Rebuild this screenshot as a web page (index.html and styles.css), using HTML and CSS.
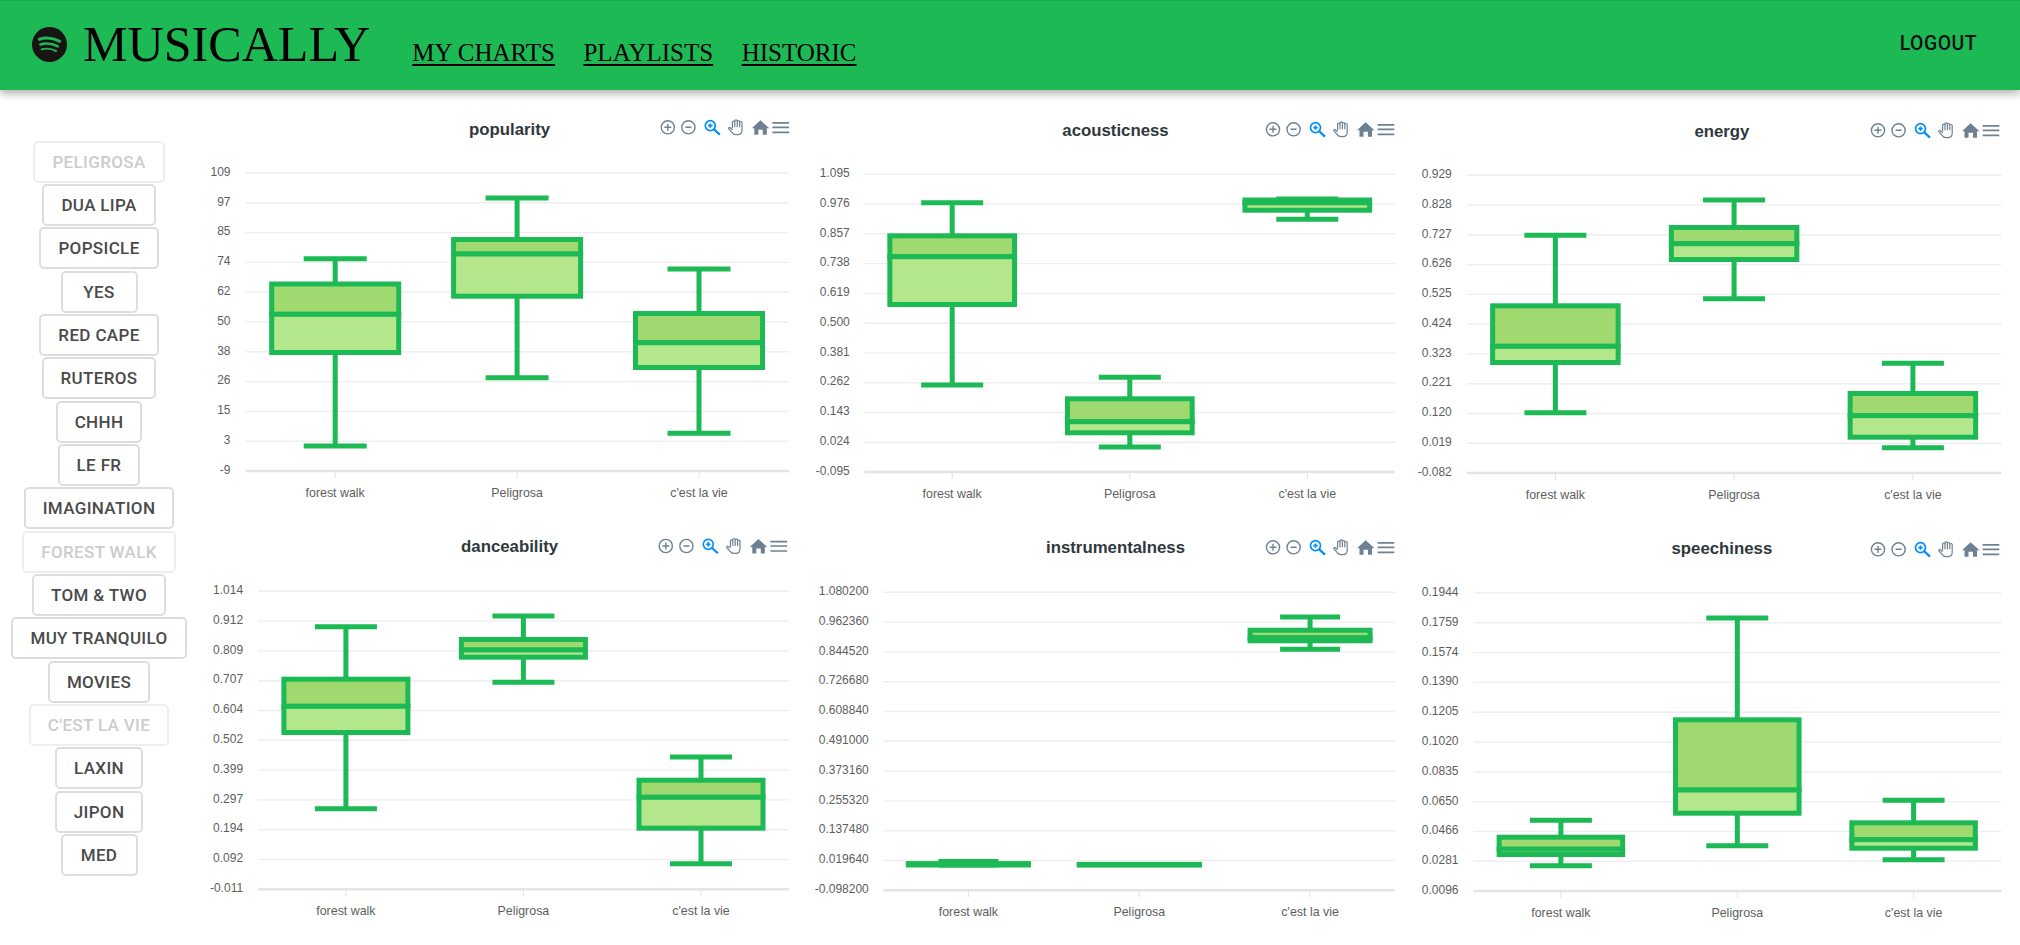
FILE: index.html
```html
<!DOCTYPE html>
<html lang="en">
<head>
<meta charset="utf-8">
<title>Musically</title>
<link rel="stylesheet" href="styles.css">
</head>
<body>
<svg class="defs" aria-hidden="true">
  <symbol id="tb" viewBox="0 0 136 20">
    <g class="ico">
      <circle cx="10" cy="10" r="6.6"/><path d="M10 6.5V13.5M6.5 10H13.5"/>
      <circle cx="30.6" cy="10" r="6.6"/><path d="M27.6 10H33.6"/>
    </g>
    <g class="ico-on">
      <circle cx="52.5" cy="8.3" r="5"/><path class="thick" d="M56 11.8L62 17.3"/><path d="M50.3 8.3H54.7M52.5 6.1V10.5"/>
    </g>
    <g class="ico thin">
      <path d="M74.6 11V5a1.2 1.2 0 0 1 2.4 0V3.7a1.2 1.2 0 0 1 2.4 0V4.4a1.2 1.2 0 0 1 2.4 0v1a1.2 1.2 0 0 1 2.4 0V13c0 2.8-1.7 4.4-4.4 4.4h-1.8c-1.7 0-2.8-.7-3.7-2l-3.3-3.8c-.7-.9.5-2 1.4-1.2L74.6 12.4M77 5V10M79.4 4.4V10M81.8 5.4V10"/>
    </g>
    <path class="ico-fill" d="M102.6 3L111.5 11H109V17.5H105V12.5H100.5V17.5H96.5V11H94Z"/>
    <path class="ico wide" d="M114.6 5.6H131.3M114.6 10H131.3M114.6 15H131.3"/>
  </symbol>
</svg>

<header class="topbar">
  <div class="brand">
    <svg class="logo" viewBox="0 0 36 36" aria-hidden="true">
      <circle cx="18" cy="18" r="18" fill="#191414"/>
      <path d="M7.5 12.6C14 10.6 22 11.2 28.5 14.8" stroke-width="3"/>
      <path d="M8.6 18C14 16.4 21 17 26.6 20" stroke-width="2.5"/>
      <path d="M9.8 23C14.5 21.8 20.4 22.2 24.8 24.8" stroke-width="2"/>
    </svg>
    <span class="wordmark">MUSICALLY</span>
  </div>
  <nav class="nav">
    <a href="#">MY CHARTS</a>
    <a href="#">PLAYLISTS</a>
    <a href="#">HISTORIC</a>
  </nav>
  <button class="logout">LOGOUT</button>
</header>

<div class="app">
  <aside class="artists">
    <button class="artist" disabled>PELIGROSA</button>
    <button class="artist">DUA LIPA</button>
    <button class="artist">POPSICLE</button>
    <button class="artist">YES</button>
    <button class="artist">RED CAPE</button>
    <button class="artist">RUTEROS</button>
    <button class="artist">CHHH</button>
    <button class="artist">LE FR</button>
    <button class="artist">IMAGINATION</button>
    <button class="artist" disabled>FOREST WALK</button>
    <button class="artist">TOM &amp; TWO</button>
    <button class="artist">MUY TRANQUILO</button>
    <button class="artist">MOVIES</button>
    <button class="artist" disabled>C'EST LA VIE</button>
    <button class="artist">LAXIN</button>
    <button class="artist">JIPON</button>
    <button class="artist">MED</button>
  </aside>

  <main class="charts">
    <!-- popularity -->
    <svg class="chart">
      <text class="title" x="309.6" y="34.5">popularity</text>
      <use href="#tb" x="457.8" y="17.3" width="136" height="20"/>
      <path class="grid" d="M45.5 73H589M45.5 102.8H589M45.5 132.6H589M45.5 162.4H589M45.5 192.2H589M45.5 222H589M45.5 251.8H589M45.5 281.6H589M45.5 311.4H589M45.5 341.2H589"/>
      <path class="axis" d="M45.5 371H589"/>
      <path class="tick" d="M135.2 371V378M317.1 371V378M499 371V378"/>
      <g class="yl">
        <text x="30.5" y="75.7">109</text><text x="30.5" y="105.5">97</text><text x="30.5" y="135.3">85</text><text x="30.5" y="165.1">74</text><text x="30.5" y="194.9">62</text><text x="30.5" y="224.7">50</text><text x="30.5" y="254.5">38</text><text x="30.5" y="284.3">26</text><text x="30.5" y="314.1">15</text><text x="30.5" y="343.9">3</text><text x="30.5" y="373.7">-9</text>
      </g>
      <g class="xl"><text x="135.2" y="397">forest walk</text><text x="317.1" y="397">Peligrosa</text><text x="499" y="397">c'est la vie</text></g>
      <path class="wh" d="M135.2 158.7V184M135.2 252.5V346M103.7 158.7H166.7M103.7 346H166.7"/>
      <rect class="up" x="71.7" y="184" width="127" height="30.3"/><rect class="lo" x="71.7" y="214.3" width="127" height="38.2"/>
      <path class="wh" d="M317.1 98V139.5M317.1 196.2V277.7M285.6 98H348.6M285.6 277.7H348.6"/>
      <rect class="up" x="253.6" y="139.5" width="127" height="14.5"/><rect class="lo" x="253.6" y="154" width="127" height="42.2"/>
      <path class="wh" d="M499 169V213.5M499 267.5V333.3M467.5 169H530.5M467.5 333.3H530.5"/>
      <rect class="up" x="435.5" y="213.5" width="127" height="29.2"/><rect class="lo" x="435.5" y="242.7" width="127" height="24.8"/>
    </svg>

    <!-- acousticness -->
    <svg class="chart">
      <text class="title" x="315.5" y="35.5">acousticness</text>
      <use href="#tb" x="463" y="19.3" width="136" height="20"/>
      <path class="grid" d="M64.5 74.3H595M64.5 104.1H595M64.5 133.8H595M64.5 163.6H595M64.5 193.4H595M64.5 223.2H595M64.5 252.9H595M64.5 282.7H595M64.5 312.5H595M64.5 342.2H595"/>
      <path class="axis" d="M64.5 372H595"/>
      <path class="tick" d="M152.2 372V379M329.8 372V379M507.3 372V379"/>
      <g class="yl">
        <text x="49.8" y="77">1.095</text><text x="49.8" y="106.8">0.976</text><text x="49.8" y="136.5">0.857</text><text x="49.8" y="166.3">0.738</text><text x="49.8" y="196.1">0.619</text><text x="49.8" y="225.9">0.500</text><text x="49.8" y="255.6">0.381</text><text x="49.8" y="285.4">0.262</text><text x="49.8" y="315.2">0.143</text><text x="49.8" y="344.9">0.024</text><text x="49.8" y="374.7">-0.095</text>
      </g>
      <g class="xl"><text x="152.2" y="398">forest walk</text><text x="329.8" y="398">Peligrosa</text><text x="507.3" y="398">c'est la vie</text></g>
      <path class="wh" d="M152.2 102.7V135.8M152.2 204.5V285M121.2 102.7H183.2M121.2 285H183.2"/>
      <rect class="up" x="89.85" y="135.8" width="124.7" height="20.9"/><rect class="lo" x="89.85" y="156.7" width="124.7" height="47.8"/>
      <path class="wh" d="M329.8 277.3V298.8M329.8 332.8V347M298.8 277.3H360.8M298.8 347H360.8"/>
      <rect class="up" x="267.45" y="298.8" width="124.7" height="22.9"/><rect class="lo" x="267.45" y="321.7" width="124.7" height="11.1"/>
      <path class="wh" d="M507.3 99V100M507.3 110.2V119.3M476.3 99H538.3M476.3 119.3H538.3"/>
      <rect class="up" x="444.95" y="100" width="124.7" height="2.8"/><rect class="lo" x="444.95" y="102.8" width="124.7" height="7.4"/>
    </svg>

    <!-- energy -->
    <svg class="chart">
      <text class="title" x="321.9" y="36.5">energy</text>
      <use href="#tb" x="468" y="20.3" width="136" height="20"/>
      <path class="grid" d="M66.8 75.3H601.4M66.8 105.1H601.4M66.8 134.8H601.4M66.8 164.6H601.4M66.8 194.4H601.4M66.8 224.2H601.4M66.8 253.9H601.4M66.8 283.7H601.4M66.8 313.5H601.4M66.8 343.2H601.4"/>
      <path class="axis" d="M66.8 373H601.4"/>
      <path class="tick" d="M155.4 373V380M334.1 373V380M512.9 373V380"/>
      <g class="yl">
        <text x="51.8" y="78">0.929</text><text x="51.8" y="107.8">0.828</text><text x="51.8" y="137.5">0.727</text><text x="51.8" y="167.3">0.626</text><text x="51.8" y="197.1">0.525</text><text x="51.8" y="226.9">0.424</text><text x="51.8" y="256.6">0.323</text><text x="51.8" y="286.4">0.221</text><text x="51.8" y="316.2">0.120</text><text x="51.8" y="345.9">0.019</text><text x="51.8" y="375.7">-0.082</text>
      </g>
      <g class="xl"><text x="155.4" y="399">forest walk</text><text x="334.1" y="399">Peligrosa</text><text x="512.9" y="399">c'est la vie</text></g>
      <path class="wh" d="M155.4 135.3V205.8M155.4 262.5V312.7M124.4 135.3H186.4M124.4 312.7H186.4"/>
      <rect class="up" x="92.65" y="205.8" width="125.5" height="40.5"/><rect class="lo" x="92.65" y="246.3" width="125.5" height="16.2"/>
      <path class="wh" d="M334.1 100V127.5M334.1 159.5V198.7M303.1 100H365.1M303.1 198.7H365.1"/>
      <rect class="up" x="271.35" y="127.5" width="125.5" height="16.2"/><rect class="lo" x="271.35" y="143.7" width="125.5" height="15.8"/>
      <path class="wh" d="M512.9 263.3V293.5M512.9 337.2V347.7M481.9 263.3H543.9M481.9 347.7H543.9"/>
      <rect class="up" x="450.15" y="293.5" width="125.5" height="22.2"/><rect class="lo" x="450.15" y="315.7" width="125.5" height="21.5"/>
    </svg>

    <!-- danceability -->
    <svg class="chart">
      <text class="title" x="309.6" y="22">danceability</text>
      <use href="#tb" x="455.8" y="6" width="136" height="20"/>
      <path class="grid" d="M58.1 61.3H589M58.1 91.1H589M58.1 120.9H589M58.1 150.7H589M58.1 180.5H589M58.1 210.3H589M58.1 240.1H589M58.1 269.9H589M58.1 299.7H589M58.1 329.5H589"/>
      <path class="axis" d="M58.1 359.3H589"/>
      <path class="tick" d="M145.9 359.3V366.3M323.4 359.3V366.3M501 359.3V366.3"/>
      <g class="yl">
        <text x="43.1" y="64">1.014</text><text x="43.1" y="93.8">0.912</text><text x="43.1" y="123.6">0.809</text><text x="43.1" y="153.4">0.707</text><text x="43.1" y="183.2">0.604</text><text x="43.1" y="213">0.502</text><text x="43.1" y="242.8">0.399</text><text x="43.1" y="272.6">0.297</text><text x="43.1" y="302.4">0.194</text><text x="43.1" y="332.2">0.092</text><text x="43.1" y="362">-0.011</text>
      </g>
      <g class="xl"><text x="145.9" y="385">forest walk</text><text x="323.4" y="385">Peligrosa</text><text x="501" y="385">c'est la vie</text></g>
      <path class="wh" d="M145.9 96.7V149.2M145.9 202.5V278.7M114.9 96.7H176.9M114.9 278.7H176.9"/>
      <rect class="up" x="83.9" y="149.2" width="124" height="27.1"/><rect class="lo" x="83.9" y="176.3" width="124" height="26.2"/>
      <path class="wh" d="M323.4 86V109.5M323.4 127.2V152.3M292.4 86H354.4M292.4 152.3H354.4"/>
      <rect class="up" x="261.4" y="109.5" width="124" height="10.5"/><rect class="lo" x="261.4" y="120" width="124" height="7.2"/>
      <path class="wh" d="M501 227V250.2M501 298.2V333.7M470 227H532M470 333.7H532"/>
      <rect class="up" x="439" y="250.2" width="124" height="17.1"/><rect class="lo" x="439" y="267.3" width="124" height="30.9"/>
    </svg>

    <!-- instrumentalness -->
    <svg class="chart">
      <text class="title" x="315.5" y="23">instrumentalness</text>
      <use href="#tb" x="463" y="7.3" width="136" height="20"/>
      <path class="grid" d="M83.4 62.3H595M83.4 92.1H595M83.4 121.9H595M83.4 151.7H595M83.4 181.5H595M83.4 211.3H595M83.4 241.1H595M83.4 270.9H595M83.4 300.7H595M83.4 330.5H595"/>
      <path class="axis" d="M83.4 360.3H595"/>
      <path class="tick" d="M168.4 360.3V367.3M339.3 360.3V367.3M510.1 360.3V367.3"/>
      <g class="yl">
        <text x="68.8" y="65">1.080200</text><text x="68.8" y="94.8">0.962360</text><text x="68.8" y="124.6">0.844520</text><text x="68.8" y="154.4">0.726680</text><text x="68.8" y="184.2">0.608840</text><text x="68.8" y="214">0.491000</text><text x="68.8" y="243.8">0.373160</text><text x="68.8" y="273.6">0.255320</text><text x="68.8" y="303.4">0.137480</text><text x="68.8" y="333.2">0.019640</text><text x="68.8" y="363">-0.098200</text>
      </g>
      <g class="xl"><text x="168.4" y="386">forest walk</text><text x="339.3" y="386">Peligrosa</text><text x="510.1" y="386">c'est la vie</text></g>
      <path class="wh" d="M138.4 331.5H198.4M138.4 335H198.4"/>
      <rect class="up" x="108.4" y="333.6" width="120" height="0.7"/><rect class="lo" x="108.4" y="334.3" width="120" height="0.7"/>
      <rect class="up" x="279.3" y="334.4" width="120" height="0.3"/><rect class="lo" x="279.3" y="334.7" width="120" height="0.3"/>
      <path class="wh" d="M510.1 87V100.2M510.1 110.8V119.3M480.1 87H540.1M480.1 119.3H540.1"/>
      <rect class="up" x="450.1" y="100.2" width="120" height="7.6"/><rect class="lo" x="450.1" y="107.8" width="120" height="3"/>
    </svg>

    <!-- speechiness -->
    <svg class="chart">
      <text class="title" x="321.9" y="24">speechiness</text>
      <use href="#tb" x="468" y="9.3" width="136" height="20"/>
      <path class="grid" d="M73.5 63H601.4M73.5 92.8H601.4M73.5 122.6H601.4M73.5 152.4H601.4M73.5 182.2H601.4M73.5 212H601.4M73.5 241.8H601.4M73.5 271.6H601.4M73.5 301.4H601.4M73.5 331.2H601.4"/>
      <path class="axis" d="M73.5 361H601.4"/>
      <path class="tick" d="M160.9 361V368M337.3 361V368M513.6 361V368"/>
      <g class="yl">
        <text x="58.5" y="66">0.1944</text><text x="58.5" y="95.8">0.1759</text><text x="58.5" y="125.6">0.1574</text><text x="58.5" y="155.4">0.1390</text><text x="58.5" y="185.2">0.1205</text><text x="58.5" y="215">0.1020</text><text x="58.5" y="244.8">0.0835</text><text x="58.5" y="274.6">0.0650</text><text x="58.5" y="304.4">0.0466</text><text x="58.5" y="334.2">0.0281</text><text x="58.5" y="364">0.0096</text>
      </g>
      <g class="xl"><text x="160.9" y="387">forest walk</text><text x="337.3" y="387">Peligrosa</text><text x="513.6" y="387">c'est la vie</text></g>
      <path class="wh" d="M160.9 290.3V307.2M160.9 324.5V335.7M129.9 290.3H191.9M129.9 335.7H191.9"/>
      <rect class="up" x="99.15" y="307.2" width="123.5" height="12"/><rect class="lo" x="99.15" y="319.2" width="123.5" height="5.3"/>
      <path class="wh" d="M337.3 88V189.8M337.3 283.2V315.7M306.3 88H368.3M306.3 315.7H368.3"/>
      <rect class="up" x="275.55" y="189.8" width="123.5" height="70.2"/><rect class="lo" x="275.55" y="260" width="123.5" height="23.2"/>
      <path class="wh" d="M513.6 270.3V292.8M513.6 318.2V329.7M482.6 270.3H544.6M482.6 329.7H544.6"/>
      <rect class="up" x="451.85" y="292.8" width="123.5" height="16.9"/><rect class="lo" x="451.85" y="309.7" width="123.5" height="8.5"/>
    </svg>
  </main>
</div>
</body>
</html>
```
FILE: styles.css
```css
* { box-sizing: border-box; }

html, body {
  margin: 0;
  height: 100%;
  background: #fff;
  overflow: hidden;
}

.defs {
  position: absolute;
  width: 0;
  height: 0;
}

/* top bar */
.topbar {
  position: relative;
  z-index: 2;
  height: 90px;
  display: flex;
  align-items: flex-start;
  padding: 15px 32px 0;
  border-top: 1px solid #1aa84c;
  background: #1db954;
  box-shadow: 0 3px 9px rgba(0, 0, 0, 0.35);
  font-family: "Liberation Serif", serif;
  color: #000;
}

.brand {
  display: flex;
  align-items: center;
  gap: 16px;
}

.logo {
  width: 35px;
  height: 35px;
  flex: none;
}

.logo path {
  fill: none;
  stroke: #1db954;
  stroke-linecap: round;
}

.wordmark {
  font-size: 50.1px;
  line-height: 56px;
}

.nav {
  display: flex;
  gap: 28.5px;
  margin-left: 42px;
  margin-top: 23px;
}

.nav a {
  color: #000;
  font-size: 25px;
  text-decoration: underline;
  text-decoration-thickness: 2px;
  text-underline-offset: 3px;
}

.logout {
  margin: 16px 11px 0 auto;
  padding: 0;
  border: 0;
  background: none;
  color: #111;
  font: 500 19.4px "Roboto", sans-serif;
  letter-spacing: 0.5px;
}

/* layout */
.app {
  display: flex;
  height: 855px;
}

/* artist buttons */
.artists {
  flex: none;
  width: 200px;
  padding-top: 50.7px;
  padding-right: 2px;
  display: flex;
  flex-direction: column;
  align-items: center;
  gap: 1.33px;
}

.artist {
  height: 42px;
  min-width: 77px;
  padding: 0 17px;
  border: 2px solid #ddd;
  border-radius: 5px;
  background: #fff;
  color: #4a4a4a;
  font: 500 17px "Roboto", sans-serif;
  letter-spacing: 0.35px;
  white-space: nowrap;
}

.artist:disabled {
  border-color: #eee;
  color: #ccc;
}

/* charts */
.charts {
  flex: none;
  display: grid;
  grid-template-columns: 600px 600px 620px;
  grid-template-rows: 430px 415px;
  padding-top: 10px;
}

.chart {
  display: block;
  width: 100%;
  height: 100%;
  font-family: "Liberation Sans", sans-serif;
}

.title {
  font-size: 16.8px;
  font-weight: 700;
  fill: #2f383d;
  text-anchor: middle;
}

.yl text {
  font-size: 12px;
  fill: #5e5e5e;
  text-anchor: end;
}

.xl text {
  font-size: 12.4px;
  fill: #5e5e5e;
  text-anchor: middle;
}

.grid {
  fill: none;
  stroke: #eee;
  stroke-width: 1.4;
}

.axis {
  fill: none;
  stroke: #e4e4e4;
  stroke-width: 2.4;
}

.tick {
  fill: none;
  stroke: #e2e2e2;
  stroke-width: 1;
}

.wh {
  fill: none;
  stroke: #1db954;
  stroke-width: 5;
}

.up, .lo {
  stroke: #1db954;
  stroke-width: 5;
}

.up { fill: #9fd96f; }
.lo { fill: #b4e68c; }

/* toolbar icons */
.ico {
  fill: none;
  stroke: #6e8192;
  stroke-width: 1.4;
}

.ico circle, .ico path { fill: none; }
.ico.thin { stroke-width: 1.2; }
.ico.wide { stroke-width: 1.7; }
.ico-fill { fill: #6e8192; }

.ico-on {
  fill: none;
  stroke: #008ffb;
  stroke-width: 1.7;
}

.ico-on .thick { stroke-width: 2.2; }
```
